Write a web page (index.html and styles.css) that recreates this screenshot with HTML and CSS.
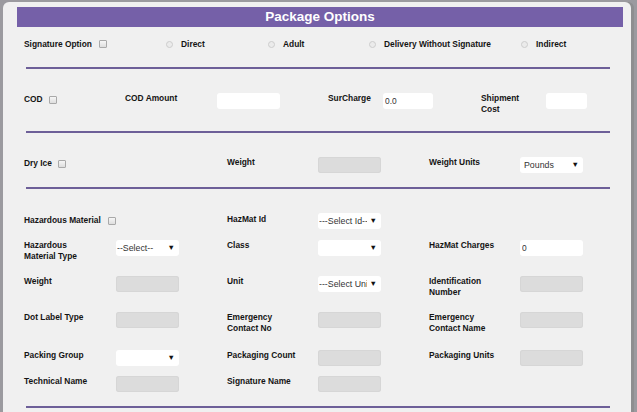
FILE: index.html
```html
<!DOCTYPE html>
<html>
<head>
<meta charset="utf-8">
<link rel="stylesheet" href="styles.css">
</head>
<body>
<div class="panel">
  <div class="title">Package Options</div>
  <div class="content">
    <div class="sig-row">
      <div class="cell"><span class="lbl">Signature Option</span><span class="chk"></span></div>
      <div class="cell"><span class="radio"></span><span class="lbl">Direct</span></div>
      <div class="cell"><span class="radio"></span><span class="lbl">Adult</span></div>
      <div class="cell"><span class="radio"></span><span class="lbl">Delivery Without Signature</span></div>
      <div class="cell"><span class="radio"></span><span class="lbl">Indirect</span></div>
    </div>
    <div class="rule rule-first"></div>

    <div class="cod-row">
      <div class="cell cod"><span class="lbl">COD</span><span class="chk"></span></div>
      <div class="lbl">COD Amount</div>
      <div><input class="inp w63" type="text"></div>
      <div class="lbl">SurCharge</div>
      <div><input class="inp w50" type="text" value="0.0"></div>
      <div class="lbl narrow">Shipment Cost</div>
      <div><input class="inp w41" type="text"></div>
    </div>
    <div class="rule"></div>

    <div class="grid dry">
      <div class="cell pad1"><span class="lbl">Dry Ice</span><span class="chk"></span></div>
      <div></div>
      <div class="lbl">Weight</div>
      <div><input class="inp dis" type="text" disabled></div>
      <div class="lbl">Weight Units</div>
      <div class="sel"><select class="pad4"><option>Pounds</option></select></div>
    </div>
    <div class="rule"></div>

    <div class="grid haz">
      <div class="cell span2 pad2"><span class="lbl">Hazardous Material</span><span class="chk"></span></div>
      <div class="lbl pad1">HazMat Id</div>
      <div class="sel"><select><option>---Select Id---</option></select></div>
      <div></div>
      <div></div>

      <div class="lbl">Hazardous Material Type</div>
      <div class="sel"><select><option>--Select--</option></select></div>
      <div class="lbl">Class</div>
      <div class="sel"><select><option></option></select></div>
      <div class="lbl">HazMat Charges</div>
      <div><input class="inp" type="text" value="0"></div>

      <div class="lbl">Weight</div>
      <div><input class="inp dis" type="text" disabled></div>
      <div class="lbl">Unit</div>
      <div class="sel"><select><option>---Select Unit---</option></select></div>
      <div class="lbl">Identification Number</div>
      <div><input class="inp dis" type="text" disabled></div>

      <div class="lbl">Dot Label Type</div>
      <div><input class="inp dis" type="text" disabled></div>
      <div class="lbl">Emergency Contact No</div>
      <div><input class="inp dis" type="text" disabled></div>
      <div class="lbl">Emergency Contact Name</div>
      <div><input class="inp dis" type="text" disabled></div>

      <div class="lbl">Packing Group</div>
      <div class="sel"><select><option></option></select></div>
      <div class="lbl">Packaging Count</div>
      <div><input class="inp dis" type="text" disabled></div>
      <div class="lbl">Packaging Units</div>
      <div><input class="inp dis" type="text" disabled></div>

      <div class="lbl">Technical Name</div>
      <div><input class="inp dis" type="text" disabled></div>
      <div class="lbl">Signature Name</div>
      <div><input class="inp dis" type="text" disabled></div>
      <div></div>
      <div></div>
    </div>
    <div class="rule"></div>
  </div>
</div>
</body>
</html>
```

FILE: styles.css
```css
html, body {
  margin: 0;
  padding: 0;
}
body {
  width: 637px;
  height: 412px;
  overflow: hidden;
  background: #9b9a9f;
  font-family: "Liberation Sans", Arial, sans-serif;
}
.panel {
  margin: 2px 0 0 3px;
  width: 628px;
  height: 420px;
  box-sizing: border-box;
  padding-top: 5px;
  background: #f0f0f0;
  border-radius: 6px 6px 0 0;
  box-shadow: 3px 0 0 #8e8e90;
}
.title {
  margin: 0 8px 0 14px;
  height: 20px;
  line-height: 19px;
  background: #7560a8;
  color: #ffffff;
  font-weight: bold;
  font-size: 13.5px;
  text-align: center;
}
.content {
  padding-left: 21px;
}
.rule {
  margin-left: 2px;
  width: 584px;
  height: 2px;
  background: #6d5f98;
}
.rule-first {
  margin-top: 15px;
}
.lbl {
  font-weight: bold;
  font-size: 8.4px;
  line-height: 11px;
  color: #141414;
  max-width: 74px;
}
.cell {
  display: flex;
  align-items: center;
}
.cell .lbl {
  max-width: none;
  white-space: nowrap;
}
.chk {
  display: inline-block;
  width: 8px;
  height: 8px;
  box-sizing: border-box;
  border: 1px solid #a9a9a9;
  border-radius: 1px;
  background: linear-gradient(#f6f6f6, #dedede);
  margin-left: 7px;
}
.radio {
  display: inline-block;
  width: 7px;
  height: 7px;
  box-sizing: border-box;
  border: 1px solid #cdcdcd;
  border-radius: 50%;
  background: #ebebeb;
  margin-right: 8px;
}
.sig-row {
  margin-top: 9px;
  height: 16px;
  display: grid;
  grid-template-columns: 142px 102px 101px 152px auto;
  align-items: center;
}
.cod-row {
  padding-top: 24px;
  height: 62px;
  box-sizing: border-box;
  display: grid;
  grid-template-columns: 101px 92px 111px 55px 98px 65px 41px;
  align-items: start;
}
.cod {
  padding-top: 1px;
  height: 11px;
}
.cod .chk {
  margin-left: 6px;
}
.narrow {
  max-width: 48px;
}
.grid {
  display: grid;
  grid-template-columns: 92px 111px 91px 111px 91px 63px;
  align-items: start;
}
.dry {
  padding-top: 24px;
  height: 54px;
  box-sizing: border-box;
  grid-template-rows: 16px;
}
.dry .chk {
  margin-left: 6px;
}
.haz {
  padding-top: 24px;
  grid-template-rows: 27px 36px 36px 38px 26px 30px;
}
.span2 {
  grid-column: span 2;
}
.pad1 {
  padding-top: 1px;
}
.pad2 {
  padding-top: 2px;
}
.inp {
  display: block;
  width: 63px;
  height: 16px;
  box-sizing: border-box;
  margin: 0;
  padding: 0 2px;
  border: none;
  border-radius: 3px;
  background: #ffffff;
  font-family: "Liberation Sans", Arial, sans-serif;
  font-size: 8.4px;
  color: #333333;
  outline: none;
}
.inp.dis {
  background: #dcdcdc;
  box-shadow: inset 0 0 0 1px #d6d6d6;
}
.w63 { width: 63px; }
.w50 { width: 50px; }
.w41 { width: 41px; }
.sel {
  position: relative;
  width: 63px;
  height: 16px;
}
.sel select {
  -webkit-appearance: none;
  appearance: none;
  display: block;
  width: 63px;
  height: 16px;
  box-sizing: border-box;
  margin: 0;
  padding: 0 14px 0 1px;
  border: none;
  border-radius: 3px;
  background: #ffffff;
  font-family: "Liberation Sans", Arial, sans-serif;
  font-size: 8.8px;
  color: #333333;
  outline: none;
}
.sel select.pad4 {
  padding-left: 4px;
}
.sel::after {
  content: "\25BC";
  position: absolute;
  right: 4px;
  top: 4px;
  font-size: 7.5px;
  line-height: 8px;
  color: #111111;
  pointer-events: none;
}
```
